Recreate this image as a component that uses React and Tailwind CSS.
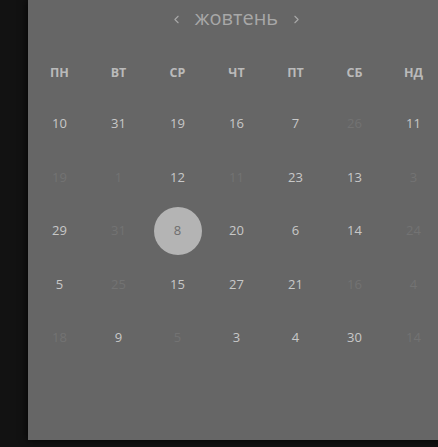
import { ChevronLeft, ChevronRight } from 'lucide-react';

const weekdays = ['ПН', 'ВТ', 'СР', 'ЧТ', 'ПТ', 'СБ', 'НД'];

// [day, faded?, selected?]
const rows = [
  [[10], [31], [19], [16], [7], [26, true], [11]],
  [[19, true], [1, true], [12], [11, true], [23], [13], [3, true]],
  [[29], [31, true], [8, false, true], [20], [6], [14], [24, true]],
  [[5], [25, true], [15], [27], [21], [16, true], [4, true]],
  [[18, true], [9], [5, true], [3], [4], [30], [14, true]],
];

function Day({ value, faded, selected }) {
  if (selected) {
    return (
      <div className="flex items-center justify-center h-[53.5px]">
        <div className="w-[48px] h-[48px] rounded-full bg-[#b4b4b4] flex items-center justify-center text-[13px] text-[#6e6e6e]">
          {value}
        </div>
      </div>
    );
  }
  return (
    <div
      className={`flex items-center justify-center h-[53.5px] text-[13px] ${faded ? 'text-[#737373]' : 'text-[#c8c8c8]'}`}
    >
      {value}
    </div>
  );
}

export default function App() {
  return (
    <div className="w-[438px] h-[447px] bg-[#121212] overflow-hidden" style={{ fontFamily: '"Open Sans", sans-serif' }}>
      <div className="ml-[28px] w-[415px] h-[440px] bg-[#666666] shadow-[0_0_8px_rgba(0,0,0,0.9)] pl-[2px]">
        <div className="h-[38px] flex items-center justify-center gap-[12px] text-[#a8a8a8]">
          <ChevronLeft className="w-[13px] h-[13px]" strokeWidth={2} />
          <span className="text-[20px] leading-none pb-[2px]">жовтень</span>
          <ChevronRight className="w-[13px] h-[13px]" strokeWidth={2} />
        </div>

        <div className="grid grid-cols-7 mt-[24px] h-[22px] items-center">
          {weekdays.map((d) => (
            <div key={d} className="text-center text-[12.5px] font-bold text-[#bababa]">
              {d}
            </div>
          ))}
        </div>

        <div className="mt-[13px]">
          {rows.map((row, i) => (
            <div key={i} className="grid grid-cols-7">
              {row.map(([v, faded, selected], j) => (
                <Day key={j} value={v} faded={faded} selected={selected} />
              ))}
            </div>
          ))}
        </div>
      </div>
    </div>
  );
}
